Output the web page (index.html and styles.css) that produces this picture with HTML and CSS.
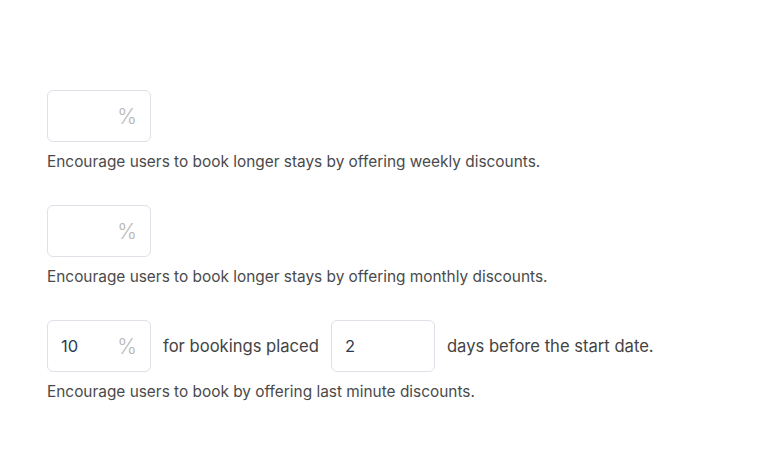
FILE: index.html
```html
<!DOCTYPE html>
<html>
<head>
<meta charset="utf-8">
<link rel="stylesheet" href="styles.css">
</head>
<body>
<div class="page">
  <div class="field">
    <div class="row">
      <div class="input pct"><span class="val"></span><span class="unit">%</span></div>
    </div>
    <p class="help">Encourage users to book longer stays by offering weekly discounts.</p>
  </div>
  <div class="field">
    <div class="row">
      <div class="input pct"><span class="val"></span><span class="unit">%</span></div>
    </div>
    <p class="help">Encourage users to book longer stays by offering monthly discounts.</p>
  </div>
  <div class="field">
    <div class="row">
      <div class="input pct"><span class="val">10</span><span class="unit">%</span></div>
      <span class="label">for bookings placed</span>
      <div class="input"><span class="val">2</span></div>
      <span class="label">days before the start date.</span>
    </div>
    <p class="help">Encourage users to book by offering last minute discounts.</p>
  </div>
</div>
</body>
</html>
```
FILE: styles.css
```css
html, body {
  margin: 0;
  padding: 0;
  background: #ffffff;
}
body {
  font-family: Inter, "Noto Sans", sans-serif;
  color: #3c3c3c;
}
.page {
  padding: 90px 0 0 47px;
  display: flex;
  flex-direction: column;
  gap: 33px;
}
.field {
  display: flex;
  flex-direction: column;
  gap: 10px;
}
.row {
  display: flex;
  align-items: center;
  gap: 12px;
}
.input {
  box-sizing: border-box;
  width: 104px;
  height: 52px;
  border: 1px solid #dfe0e8;
  border-radius: 6px;
  display: flex;
  align-items: center;
  justify-content: space-between;
  padding: 0 13px 0 13px;
  font-size: 16.5px;
  color: #2d3a50;
}
.unit {
  color: #b8b8b8;
  font-size: 21px;
  font-weight: 300;
}
.label {
  font-size: 16.6px;
  color: #444;
}
.help {
  margin: 0;
  font-size: 15.4px;
  line-height: 20px;
  color: #4a4a4a;
}
```
